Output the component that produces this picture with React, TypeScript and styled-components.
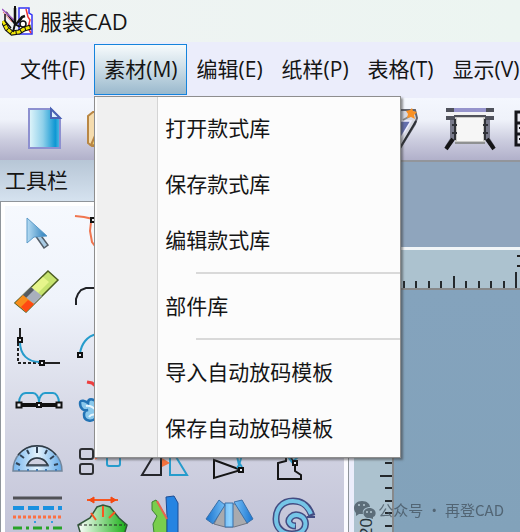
import React from "react";
import styled, { createGlobalStyle, css } from "styled-components";

const GlobalStyle = createGlobalStyle`
  * { box-sizing: border-box; }
  body {
    margin: 0;
    overflow: hidden;
    color: #151515;
    font-family: "Open Sans", "Noto Sans CJK SC", sans-serif;
    font-size: 21px;
  }
  button { font: inherit; color: inherit; border: 0; background: none; padding: 0; }
  svg { display: block; }
`;

const Window = styled.div`
  display: flex;
  flex-direction: column;
  height: 100vh;
  overflow: hidden;
  background: #ebedfb;
`;

const TitleBar = styled.header`
  display: flex;
  align-items: center;
  flex: none;
  gap: 6px;
  height: 42px;
  padding-left: 2px;
  background: linear-gradient(90deg, #eff3f3, #ecf5f1);
`;

const Title = styled.h1`
  margin: 0;
  font-size: 22px;
  font-weight: 400;
  line-height: 40px;
`;

const MenuBar = styled.nav`
  display: flex;
  flex: none;
  align-items: flex-start;
  height: 56px;
  padding: 2px 0 0 10px;
`;

const MenuSlot = styled.div`
  position: relative;
  flex: none;
`;

const MenuTitle = styled.button<{ $open?: boolean }>`
  height: 51px;
  padding: 0 8px 0 9px;
  border: 1px solid transparent;
  line-height: 49px;
  white-space: nowrap;
  ${(p) =>
    p.$open &&
    css`
      border-color: #1583dc;
      background: linear-gradient(#f6fafc, #cfdfe8 45%, #9ab9cd);
    `}
`;

const Dropdown = styled.div`
  position: absolute;
  z-index: 2;
  top: 52px;
  left: 0;
  width: 307px;
  padding: 3px 0 1px;
  border: 1px solid #8e8e8e;
  background: linear-gradient(90deg, #fcfcfc 2px, #f0f0f0 2px 62px, #d4d4d4 62px 63px, #fcfcfc 63px);
  box-shadow: 2px 2px 2px rgba(60, 60, 60, 0.55);
`;

const MenuItem = styled.button`
  display: block;
  width: 100%;
  height: 56px;
  padding-left: 70px;
  line-height: 54px;
  text-align: left;
`;

const Separator = styled.hr`
  height: 2px;
  margin: 4px 0 4px 101px;
  border: 0;
  background: #d9d9d9;
`;

const Toolbar = styled.div`
  display: flex;
  flex: none;
  height: 62px;
  padding-left: 13px;
  background: linear-gradient(#f4f7fe, #eff2fa 35%, #cccddf 68%, #b1b0ca);
`;

const ToolGroup = styled.div`
  display: flex;
  flex: none;
  & + & { margin-left: 233px; }
`;

const ToolButton = styled.button`
  flex: none;
  width: 64px;
  height: 56px;
`;

const Body = styled.main`
  display: flex;
  flex: 1;
  min-height: 0;
`;

const Palette = styled.aside`
  display: flex;
  flex: none;
  flex-direction: column;
  width: 349px;
`;

const PaletteTitle = styled.h2`
  flex: none;
  height: 41px;
  margin: 0;
  padding-left: 5px;
  font-size: 21px;
  font-weight: 400;
  line-height: 40px;
  background: linear-gradient(#b7c6d6, #d5e2ef);
`;

const PaletteGrid = styled.div`
  display: grid;
  flex: 1;
  grid-template-columns: repeat(5, 64px);
  grid-auto-rows: 56px;
  min-height: 0;
  overflow: hidden;
  border: 1px solid #8f959b;
  border-bottom: 0;
  background: linear-gradient(#f6f9fe, #eff3fb 30%, #d8dae7 62%, #c3c4d8);
  box-shadow: inset 4px 0 #fff, inset -4px 0 #fbfbff, inset 0 4px #fff;
  padding: 4px;
`;

const Workspace = styled.section`
  display: flex;
  flex: 1;
  flex-direction: column;
  min-width: 0;
  margin-left: 5px;
  border-top: 2px solid #92959b;
  background: #8fa5bd;
`;

const Notes = styled.div`
  flex: none;
  height: 85px;
`;

const TopRuler = styled.div`
  flex: none;
  height: 43px;
  overflow: hidden;
  border-top: 3px solid #f1f5f7;
  border-bottom: 2px solid #87898b;
  background: #acc2cf;
`;

const Sheet = styled.div`
  display: flex;
  flex: 1;
  min-height: 0;
  background: linear-gradient(#84a3bd, #82a2ba);
`;

const SideRuler = styled.div`
  flex: none;
  width: 40px;
  overflow: hidden;
  border-right: 2px solid #87898b;
  background: #acc2cf;
`;

const Watermark = styled.div`
  position: fixed;
  right: 16px;
  bottom: 10px;
  display: flex;
  align-items: center;
  gap: 2px;
  color: rgba(65, 80, 92, 0.75);
  font-family: "Noto Sans CJK SC", sans-serif;
  font-size: 15px;
  line-height: 24px;
  white-space: nowrap;
`;

const Icon = ({ children, w = 64, h = 56 }: { children: React.ReactNode; w?: number; h?: number }) => (
  <svg width={w} height={h} viewBox={`0 0 ${w} ${h}`} fill="none" aria-hidden="true">
    {children}
  </svg>
);

const Node = ({ x, y, s = 5 }: { x: number; y: number; s?: number }) => (
  <rect x={x - s / 2} y={y - s / 2} width={s} height={s} fill="#e8eaf0" stroke="#111" strokeWidth="2" />
);

const AppLogo = () => (
  <Icon w={32} h={30}>
    <path d="M17 2h10v5l3 2v19H17z" fill="#fff" stroke="#3434f4" strokeWidth="1.5" />
    <path d="M24 3l2 8 2 3-2 8 3 5" stroke="#e33" strokeWidth="1.5" />
    <path d="M1 15l4 8 5 4 7-1 5-3 7-2" stroke="#111" strokeWidth="5" />
    <path d="M1 15l4 8 5 4 7-1 5-3 7-2" stroke="#f2e90a" strokeWidth="3" strokeDasharray="4 1" />
    <path d="M13 0v18l-2 8M14 18l6-6M4 6l9 12 5 3" stroke="#111" strokeWidth="2" />
    <path d="M0 3l12 11" stroke="#a05ac0" strokeWidth="1.5" />
    <path d="M1 6l9 10" stroke="#e77" />
    <circle cx="21" cy="18" r="3" fill="#fff" stroke="#111" strokeWidth="1.5" />
    <path d="M3 8v7l6 7" stroke="#111" strokeWidth="1.5" />
    <path d="M13 2v15M16 16l4-5 3-1" stroke="#111" strokeWidth="2.5" />
  </Icon>
);

const NewFile = () => (
  <Icon>
    <defs>
      <linearGradient id="sheet"><stop stopColor="#e2f6fb" /><stop offset=".45" stopColor="#8fd0ea" /><stop offset=".85" stopColor="#0e97d3" /><stop offset="1" stopColor="#55bfe6" /></linearGradient>
    </defs>
    <path d="M16 11h22l9 9v30H16z" fill="url(#sheet)" stroke="#8d90d0" strokeWidth="2" />
    <path d="M38 11v9h9z" fill="#dff1fc" stroke="#4a62b4" strokeWidth="2" />
  </Icon>
);

const OpenFolder = () => (
  <Icon>
    <path d="M11 18l5-4h8l4 3h20v27l-5 4H15l-4-3z" fill="#f5dcae" stroke="#b98744" strokeWidth="2" />
    <path d="M14 47l10-23h28L42 48z" fill="#f8d36c" stroke="#b98744" strokeWidth="2" />
  </Icon>
);

const Digitizer = () => (
  <Icon>
    <path d="M9 12h32l2 8-2 6-16 26H8z" fill="#d6d8e1" stroke="#62646e" strokeWidth="2" />
    <path d="M10 23h27L25 43H10z" fill="#6570ae" stroke="#eef" strokeWidth="1.5" />
    <path d="M42 23L26 50" stroke="#2d3036" strokeWidth="2" />
    <path d="M29 22l9-5" stroke="#888" strokeWidth="2" />
    <path d="M38 10l1 3 4 1-3 3 1 4-4-2-4 1 1-4-2-3 4-1z" fill="#f99125" />
  </Icon>
);

const Plotter = () => (
  <Icon>
    <path d="M14 21v20l-5 8M50 21v20l5 8" stroke="#77798a" strokeWidth="4" />
    <path d="M15 41l-7 10M49 41l7 10" stroke="#151517" strokeWidth="4" />
    <path d="M18 19h28v25H18z" fill="#f6f6f6" stroke="#cbcbc8" strokeWidth="2" />
    <path d="M17 45h30" stroke="#8f9192" strokeWidth="2" />
    <path d="M8 12h48M8 20h9M47 20h9" stroke="#50525c" strokeWidth="4" />
    <path d="M16 12h32" stroke="#9694cc" strokeWidth="4" />
    <path d="M9 16h46" stroke="#f2f2f2" strokeWidth="3" />
    <path d="M16 18h32" stroke="#50525a" strokeWidth="2" />
    <path d="M17 21v21M47 21v21M14 27h5M45 27h5M14 35h5M45 35h5" stroke="#303238" strokeWidth="2" />
  </Icon>
);

const SizeTable = () => (
  <Icon>
    <path d="M14 14h40v33H14zM14 25h40M14 36h40M27 14v33" fill="#e8e8f0" stroke="#15151a" strokeWidth="3" />
    <path d="M17 30h3M17 41h3" stroke="#15151a" strokeWidth="2" />
  </Icon>
);

const tools: { name: string; art: React.ReactNode }[] = [
  {
    name: "选择",
    art: (
      <>
        <defs><linearGradient id="arrow"><stop stopColor="#b6dcf3" /><stop offset="1" stopColor="#287cba" /></linearGradient></defs>
        <path d="M30 29l9 13 4-3-9-12z" fill="#a9cbe4" stroke="#545e68" strokeWidth="1.5" />
        <path d="M22 12v25l7-6 13-1z" fill="url(#arrow)" stroke="#5b9ac8" />
      </>
    ),
  },
  {
    name: "调整",
    art: (
      <>
        <path d="M6 10l9 1 9 2M22 16l-1 9 2 11 6 8" stroke="#f07650" strokeWidth="2" />
        <Node x={24} y={14} s={4} />
      </>
    ),
  },
  { name: "移动", art: <path d="M10 20h30v20H10z" stroke="#222" strokeWidth="2" /> },
  { name: "旋转", art: <circle cx="32" cy="28" r="14" stroke="#269ccc" strokeWidth="2" /> },
  { name: "对称", art: <path d="M32 10v34M12 40l16-24M52 40L36 16" stroke="#222" strokeWidth="2" /> },
  {
    name: "橡皮擦",
    art: (
      <>
        <path d="M43 9l10 9-32 32-11-9z" fill="#c6e36f" stroke="#4c5d22" strokeWidth="1.5" />
        <path d="M38 15l6 5-16 16-7-5z" fill="#e6f58b" />
        <path d="M26 25l11 9-9 9-11-9z" fill="#a9b0bc" />
        <path d="M26 25l3 3-9 9-3-3z" fill="#555b62" />
        <path d="M18 33l11 9-8 8-11-9z" fill="#f88c1b" />
        <path d="M23 38l6 4-8 8-5-5z" fill="#ff4912" />
      </>
    ),
  },
  { name: "圆角", art: <path d="M7 43v-6l2-5 3-4 5-2h22" stroke="#202226" strokeWidth="2" /> },
  { name: "直线", art: <path d="M10 40L50 16" stroke="#222" strokeWidth="2" /> },
  { name: "矩形", art: <path d="M14 16h34v26H14z" stroke="#269ccc" strokeWidth="2" /> },
  { name: "圆", art: <circle cx="32" cy="28" r="14" stroke="#222" strokeWidth="2" /> },
  {
    name: "角连接",
    art: (
      <>
        <path d="M15 10v12M37 45h18" stroke="#222" strokeWidth="2" />
        <path d="M13 25v20h24" stroke="#222" strokeWidth="2" strokeDasharray="3 2" />
        <path d="M15 24c0 13 8 20 20 20" stroke="#269ccc" strokeWidth="2" />
        <Node x={15} y={22} s={4} /><Node x={37} y={45} s={4} />
      </>
    ),
  },
  {
    name: "弧线",
    art: (
      <>
        <path d="M11 36c1-10 7-18 17-20" stroke="#269ccc" strokeWidth="2" />
        <Node x={11} y={37} s={4} /><Node x={28} y={16} s={4} />
      </>
    ),
  },
  { name: "曲线", art: <path d="M10 40c10-40 30 20 44-20" stroke="#222" strokeWidth="2" /> },
  { name: "平行", art: <path d="M10 20h40M10 34h40" stroke="#269ccc" strokeWidth="2" /> },
  { name: "剪断", art: <path d="M14 14l34 28M48 14L14 42" stroke="#222" strokeWidth="2" /> },
  {
    name: "等分",
    art: (
      <>
        <path d="M14 29c0-6 3-10 7-10h7c3 0 6 4 6 9 0-5 3-9 6-9h8c3 0 6 4 6 10M34 24v7" stroke="#269ccc" strokeWidth="2" />
        <path d="M14 31h40" stroke="#111" strokeWidth="4" />
        <Node x={14} y={31} /><Node x={34} y={31} s={4} /><Node x={54} y={31} />
      </>
    ),
  },
  {
    name: "剪刀",
    art: (
      <>
        <path d="M18 8l5 1 6 5" stroke="#ed3f3f" strokeWidth="3" />
        <path d="M11 29c0-4 6-2 8 0 0-5 5-5 9 0v14c-5 6-13 4-13-2 0-3 2-5 4-5-4 1-8-1-8-7z" fill="#8bc9ec" stroke="#2273b5" strokeWidth="2.5" />
        <path d="M17 32c4-1 7 1 11 5M20 43c2-3 5-3 8-2" stroke="#e7f6ff" strokeWidth="2" />
      </>
    ),
  },
  { name: "省道", art: <path d="M12 16h40L32 42z" stroke="#222" strokeWidth="2" /> },
  { name: "褶", art: <path d="M12 14v28M26 14v28M40 14v28" stroke="#269ccc" strokeWidth="2" /> },
  { name: "加点", art: <Node x={32} y={28} /> },
  {
    name: "量角器",
    art: (
      <>
        <defs><linearGradient id="angle"><stop stopColor="#75b5ef" /><stop offset=".5" stopColor="#e4f3fd" /><stop offset="1" stopColor="#60a8e7" /></linearGradient></defs>
        <path fillRule="evenodd" d="M8 41c0-14 10-25 24-25s25 11 25 25zM22 36h21c-2-5-6-8-11-8s-9 3-10 8z" fill="url(#angle)" stroke="#72869c" strokeWidth="1.5" />
        <path d="M13 25a24 24 0 0 1 38 0M22 35h21c-2-4-6-7-11-7s-8 3-10 7z" stroke="#303b45" strokeWidth="1.5" />
        <path d="M11 33l4 2M15 25l4 3M22 20l2 4M32 17v6M42 20l-2 4M49 26l-4 3M53 34l-4 1" stroke="#314256" strokeWidth="2" />
        <path d="M14 39v2M23 39v2M32 39v2M41 39v2M51 39v2" stroke="#4a7bb0" strokeWidth="2" />
      </>
    ),
  },
  {
    name: "阵列",
    art: (
      <>
        <rect x="11" y="19" width="13" height="10" rx="2" stroke="#2d2e32" strokeWidth="2" />
        <rect x="11" y="34" width="13" height="10" rx="2" stroke="#2d2e32" strokeWidth="2" />
        <rect x="38" y="24" width="13" height="12" rx="2" stroke="#269ccc" strokeWidth="2" />
        <path d="M26 29l5-4" stroke="#f06b43" strokeWidth="2" />
      </>
    ),
  },
  {
    name: "镜像",
    art: (
      <>
        <path d="M28 22v23H9l15-25M28 17v6" stroke="#25262b" strokeWidth="2" />
        <path d="M37 17v28h17z" stroke="#269ccc" strokeWidth="2" />
        <path d="M29 28v9l8-4z" fill="#f5713d" />
      </>
    ),
  },
  {
    name: "转省",
    art: (
      <>
        <path d="M17 30l27 10-27 8z" stroke="#151515" strokeWidth="2" />
        <path d="M39 22l3 13 4-13M42 35l-2 3M43 34l2 3" stroke="#269ccc" strokeWidth="2" />
        <Node x={44} y={40} s={4} />
      </>
    ),
  },
  {
    name: "裁片",
    art: (
      <>
        <path d="M17 49V33l8-2v-6l5 3 4 6v7l6 4v4z" stroke="#151515" strokeWidth="2" />
        <path d="M27 27l4 5 6-5" stroke="#269ccc" strokeWidth="2" />
        <Node x={34} y={33} s={4} />
      </>
    ),
  },
  {
    name: "线型",
    art: (
      <>
        <path d="M8 12h49" stroke="#505156" strokeWidth="3" />
        <path d="M8 22h49" stroke="#1a91e0" strokeWidth="4" strokeDasharray="11 4" />
        <path d="M8 31h49" stroke="#fc7043" strokeWidth="3" strokeDasharray="3 2" />
        <path d="M29 36h2M46 36h2" stroke="#369ce1" strokeWidth="2" />
        <path d="M8 42h49" stroke="#28a329" strokeWidth="3" strokeDasharray="9 4 3 4" />
      </>
    ),
  },
  {
    name: "展开",
    art: (
      <>
        <defs><linearGradient id="leaf"><stop stopColor="#fff" /><stop offset="1" stopColor="#18af15" /></linearGradient></defs>
        <path d="M9 39l12-7 7-11 6-2 7 2 9 11 8 7-5 17H14z" fill="url(#leaf)" stroke="#32563a" strokeWidth="1.5" />
        <path d="M10 39h46" stroke="#222" strokeDasharray="3 2" />
        <path d="M18 14h31M34 20v11M22 27l5 7M46 26l-6 6" stroke="#f85620" strokeWidth="2" />
        <path d="M20 14l5-3v6zM47 14l-5-3v6z" fill="#f44912" stroke="#f44912" />
      </>
    ),
  },
  {
    name: "合并",
    art: (
      <>
        <path d="M19 16l4-2 11 18v24H22l-2-18 4-8-5-6z" fill="#79ce4d" stroke="#3a8030" />
        <path d="M33 11l8-1 4 7v39H34V30z" fill="#2584e2" stroke="#1d4c94" />
        <path d="M24 15l10 18" stroke="#e86450" strokeWidth="2" />
      </>
    ),
  },
  {
    name: "裙褶",
    art: (
      <>
        <defs><linearGradient id="pleat"><stop stopColor="#1672ce" /><stop offset=".5" stopColor="#8fd2ff" /><stop offset="1" stopColor="#1975d1" /></linearGradient></defs>
        <path d="M27 18L17 38l11 3h9l14-4-12-19z" fill="#a9aaae" stroke="#707582" />
        <path d="M22 14L9 33l7 5 12-19zM28 17h8v24h-8zM37 16l8-2 11 19-6 4z" fill="url(#pleat)" stroke="#3a70a9" />
      </>
    ),
  },
  {
    name: "螺旋",
    art: (
      <>
        <path d="M51 30c-3-9-8-15-19-15-11 0-17 8-17 18 0 9 7 15 16 15 10 0 15-6 13-13-2-6-10-8-14-4-4 4-2 9 5 9" stroke="#434c82" strokeWidth="7" />
        <path d="M50 28c-3-7-8-13-18-13-11 0-17 8-17 18s7 15 16 15c10 0 15-6 13-13-2-6-10-8-14-4-4 4-2 8 4 9" stroke="#75c5e7" strokeWidth="4" />
        <path d="M46 31h8" stroke="#434c82" strokeWidth="2" />
      </>
    ),
  },
];

const menus = ["文件(F)", "素材(M)", "编辑(E)", "纸样(P)", "表格(T)", "显示(V)"];
const commands = [["打开款式库", "保存款式库", "编辑款式库"], ["部件库"], ["导入自动放码模板", "保存自动放码模板"]];

// Positions along a ruler; every second minor tick is 25px apart.
const tickAt = (i: number) => Math.round(i * 12.5);

const HorizontalScale = () => (
  <svg width="1200" height="38" aria-hidden="true">
    {Array.from({ length: 90 }, (_, i) => {
      const len = i % 10 === 9 ? 16 : i % 5 === 4 ? 12 : 7;
      return <rect key={i} x={49 + tickAt(i + 1) - 13} y={38 - len} width="2" height={len} fill="#24292d" />;
    })}
    <path d="M163 6h6M163 16h6" stroke="#222" strokeWidth="2" />
  </svg>
);

const VerticalScale = () => (
  <svg width="38" height="1000" aria-hidden="true">
    {Array.from({ length: 70 }, (_, i) => {
      const len = i % 5 === 0 ? 12 : 7;
      return <rect key={i} x={38 - len} y={122 + tickAt(i)} width={len} height="2" fill="#24292d" />;
    })}
    <text transform="translate(18 247) rotate(-90)" fontFamily="Liberation Sans, sans-serif" fontSize="17" fill="#26323a">20</text>
  </svg>
);

const ChatLogo = () => (
  <Icon w={22} h={18}>
    <path d="M8 0c5 0 8 3 8 6-5 0-8 3-7 7H5l-3 2v-3C-2 8 0 0 8 0z" fill="currentColor" />
    <path d="M15 7c8 0 8 8 4 9v2l-3-1c-8 1-9-9-1-10z" fill="currentColor" />
    <g fill="#b8cbd5"><circle cx="5" cy="4" r="1" /><circle cx="10" cy="4" r="1" /><circle cx="13" cy="11" r="1" /><circle cx="17" cy="11" r="1" /></g>
  </Icon>
);

export default function App() {
  return (
    <>
      <GlobalStyle />
      <Window>
        <TitleBar>
          <AppLogo />
          <Title>服装CAD</Title>
        </TitleBar>
        <MenuBar>
          {menus.map((label, i) => (
            <MenuSlot key={label}>
              <MenuTitle $open={i === 1}>{label}</MenuTitle>
              {i === 1 && (
                <Dropdown role="menu">
                  {commands.map((group, g) => (
                    <React.Fragment key={g}>
                      {g > 0 && <Separator />}
                      {group.map((c) => <MenuItem key={c} role="menuitem">{c}</MenuItem>)}
                    </React.Fragment>
                  ))}
                </Dropdown>
              )}
            </MenuSlot>
          ))}
        </MenuBar>
        <Toolbar>
          <ToolGroup>
            <ToolButton aria-label="新建"><NewFile /></ToolButton>
            <ToolButton aria-label="打开"><OpenFolder /></ToolButton>
          </ToolGroup>
          <ToolGroup>
            <ToolButton aria-label="数化板"><Digitizer /></ToolButton>
            <ToolButton aria-label="绘图仪"><Plotter /></ToolButton>
            <ToolButton aria-label="尺码表"><SizeTable /></ToolButton>
          </ToolGroup>
        </Toolbar>
        <Body>
          <Palette>
            <PaletteTitle>工具栏</PaletteTitle>
            <PaletteGrid>
              {tools.map((t) => (
                <ToolButton key={t.name} aria-label={t.name}><Icon>{t.art}</Icon></ToolButton>
              ))}
            </PaletteGrid>
          </Palette>
          <Workspace>
            <Notes />
            <TopRuler><HorizontalScale /></TopRuler>
            <Sheet>
              <SideRuler><VerticalScale /></SideRuler>
            </Sheet>
          </Workspace>
        </Body>
        <Watermark>
          <ChatLogo />
          <span>公众号 · 再登CAD</span>
        </Watermark>
      </Window>
    </>
  );
}
